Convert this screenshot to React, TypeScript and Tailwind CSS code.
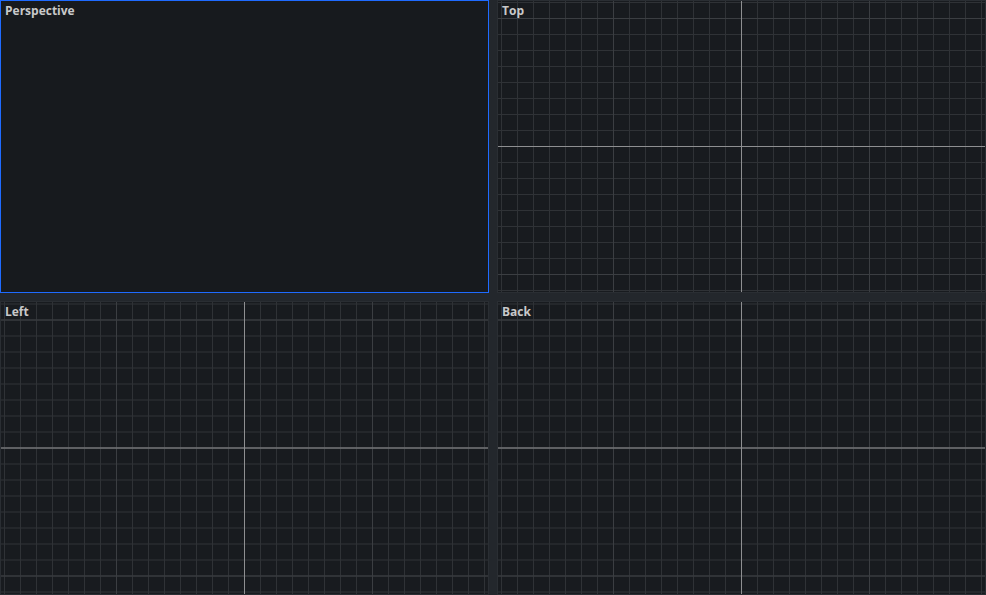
import React from "react";

function Grid({ id }: { id: string }) {
  return (
    <svg className="absolute inset-0 h-full w-full" aria-hidden="true">
      <defs>
        <pattern
          id={`${id}-minor`}
          patternUnits="userSpaceOnUse"
          x="50%"
          y="50%"
          width="16"
          height="16"
          patternTransform="translate(-0.5,-0.5)"
        >
          <rect x="0" y="0" width="16" height="1" fill="#2f3236" />
          <rect x="0" y="0" width="1" height="16" fill="#2f3236" />
        </pattern>
        <pattern
          id={`${id}-major`}
          patternUnits="userSpaceOnUse"
          x="50%"
          y="50%"
          width="128"
          height="128"
          patternTransform="translate(-0.5,-0.5)"
        >
          <rect x="0" y="0" width="128" height="1" fill="#3b3e42" />
          <rect x="0" y="0" width="1" height="128" fill="#3b3e42" />
        </pattern>
      </defs>
      <rect width="100%" height="100%" fill={`url(#${id}-minor)`} />
      <rect width="100%" height="100%" fill={`url(#${id}-major)`} />
      <line x1="50%" y1="0" x2="50%" y2="100%" stroke="#8e8f91" strokeWidth="1" />
      <line x1="0" y1="50%" x2="100%" y2="50%" stroke="#8e8f91" strokeWidth="1" />
    </svg>
  );
}

function Viewport({ label, grid, active }: { label: string; grid?: boolean; active?: boolean }) {
  return (
    <div
      className={
        active
          ? "relative overflow-hidden border border-[#1f6bff] bg-[#171a1e]"
          : "relative overflow-hidden border border-[#2a2e33] bg-[#181b1f]"
      }
    >
      {grid && <Grid id={label.toLowerCase()} />}
      <div className="absolute left-[4px] top-[2px] text-[12px] font-bold leading-[16px] text-[#c8c9ca] [font-family:'Open_Sans',sans-serif]">
        {label}
      </div>
    </div>
  );
}

export default function App() {
  return (
    <div className="grid h-[595px] w-[986px] grid-cols-2 grid-rows-[293px_294px] gap-2 bg-[#23272c]">
      <Viewport label="Perspective" active />
      <Viewport label="Top" grid />
      <Viewport label="Left" grid />
      <Viewport label="Back" grid />
    </div>
  );
}
